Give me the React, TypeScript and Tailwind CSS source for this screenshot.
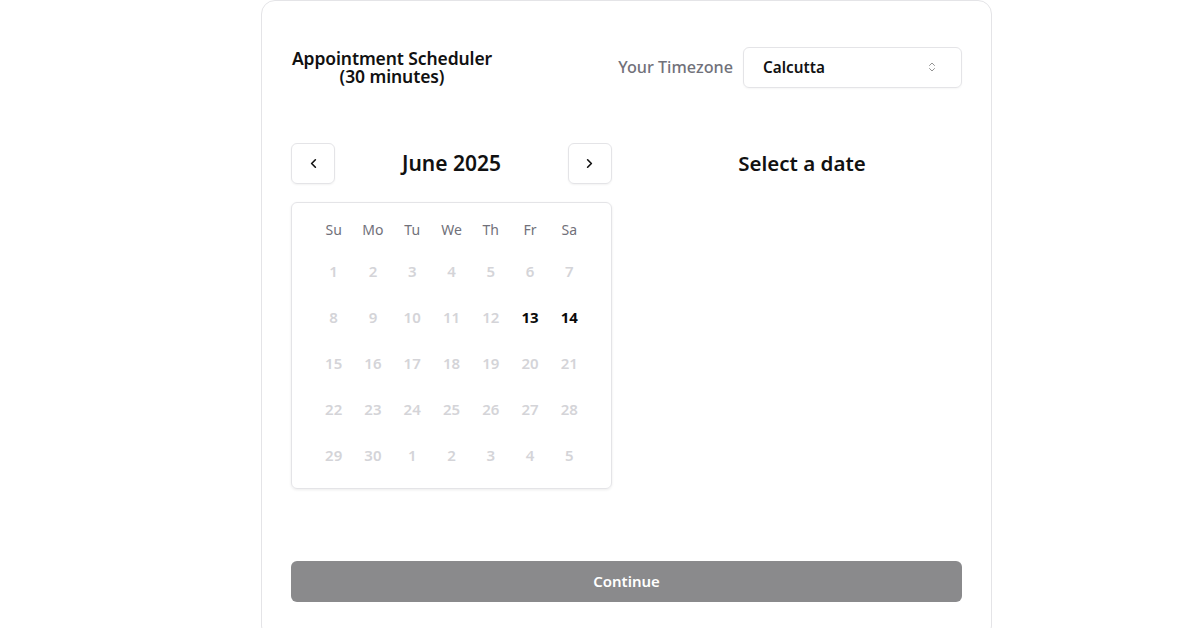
import React from "react";
import { ChevronLeft, ChevronRight, ChevronsUpDown } from "lucide-react";

const days = ["Su", "Mo", "Tu", "We", "Th", "Fr", "Sa"];
const cells: { d: number; active: boolean }[] = [];
for (let i = 1; i <= 30; i++) cells.push({ d: i, active: i === 13 || i === 14 });
for (let i = 1; i <= 5; i++) cells.push({ d: i, active: false });

export default function App() {
  return (
    <div
      className="w-[1200px] h-[628px] bg-white overflow-hidden"
      style={{ fontFamily: '"Noto Sans", "Open Sans", sans-serif' }}
    >
      <div className="ml-[261px] w-[731px] h-[640px] border border-[#e4e4e7] rounded-[14px] bg-white px-[29px] pt-[46px] text-[#111]">
        <div className="flex items-center justify-between h-[40px]">
          <div className="w-[202px] text-center text-[17.5px] leading-[18px] font-semibold tracking-[-0.1px]">
            Appointment Scheduler
            <br />
            (30 minutes)
          </div>
          <div className="flex items-center gap-[10px]">
            <span className="text-[16.2px] font-medium text-[#71717a]">Your Timezone</span>
            <div className="w-[219px] h-[41px] border border-[#e4e4e7] rounded-[6px] flex items-center justify-between pl-[19px] pr-[23px] shadow-[0_1px_2px_rgba(0,0,0,0.04)]">
              <span className="text-[15.3px] font-semibold">Calcutta</span>
              <ChevronsUpDown size={12} strokeWidth={1.8} className="text-[#888]" />
            </div>
          </div>
        </div>

        <div className="flex gap-[30px] mt-[56px]">
          <div className="w-[321px]">
            <div className="flex items-center justify-between h-[41px]">
              <div className="w-[44px] h-[41px] border border-[#e4e4e7] rounded-[6px] flex items-center justify-center shadow-[0_1px_2px_rgba(0,0,0,0.05)]">
                <ChevronLeft size={15} strokeWidth={2.6} className="text-[#111]" />
              </div>
              <span className="text-[21px] font-semibold">June 2025</span>
              <div className="w-[44px] h-[41px] border border-[#e4e4e7] rounded-[6px] flex items-center justify-center shadow-[0_1px_2px_rgba(0,0,0,0.05)]">
                <ChevronRight size={15} strokeWidth={2.6} className="text-[#111]" />
              </div>
            </div>
            <div className="mt-[18px] h-[287px] border border-[#e4e4e7] rounded-[6px] shadow-[0_1px_3px_rgba(0,0,0,0.08)] px-[22px] pt-[14px]">
              <div className="grid grid-cols-7">
                {days.map((d) => (
                  <div key={d} className="h-[24px] flex items-center justify-center text-[14px] text-[#71717a]">
                    {d}
                  </div>
                ))}
              </div>
              <div className="grid grid-cols-7 mt-[7px]">
                {cells.map((c, i) => (
                  <div
                    key={i}
                    className={
                      "h-[46px] flex items-center justify-center text-[15px] " +
                      (c.active ? "font-bold text-[#0a0a0a]" : "font-semibold text-[#d4d4d8]")
                    }
                  >
                    {c.d}
                  </div>
                ))}
              </div>
            </div>
          </div>
          <div className="flex-1">
            <div className="h-[41px] flex items-center justify-center text-[20.5px] font-semibold">
              Select a date
            </div>
          </div>
        </div>

        <div className="mt-[72px] h-[41px] rounded-[6px] bg-[#8a8a8c] flex items-center justify-center text-white text-[15px] font-semibold">
          Continue
        </div>
      </div>
    </div>
  );
}
